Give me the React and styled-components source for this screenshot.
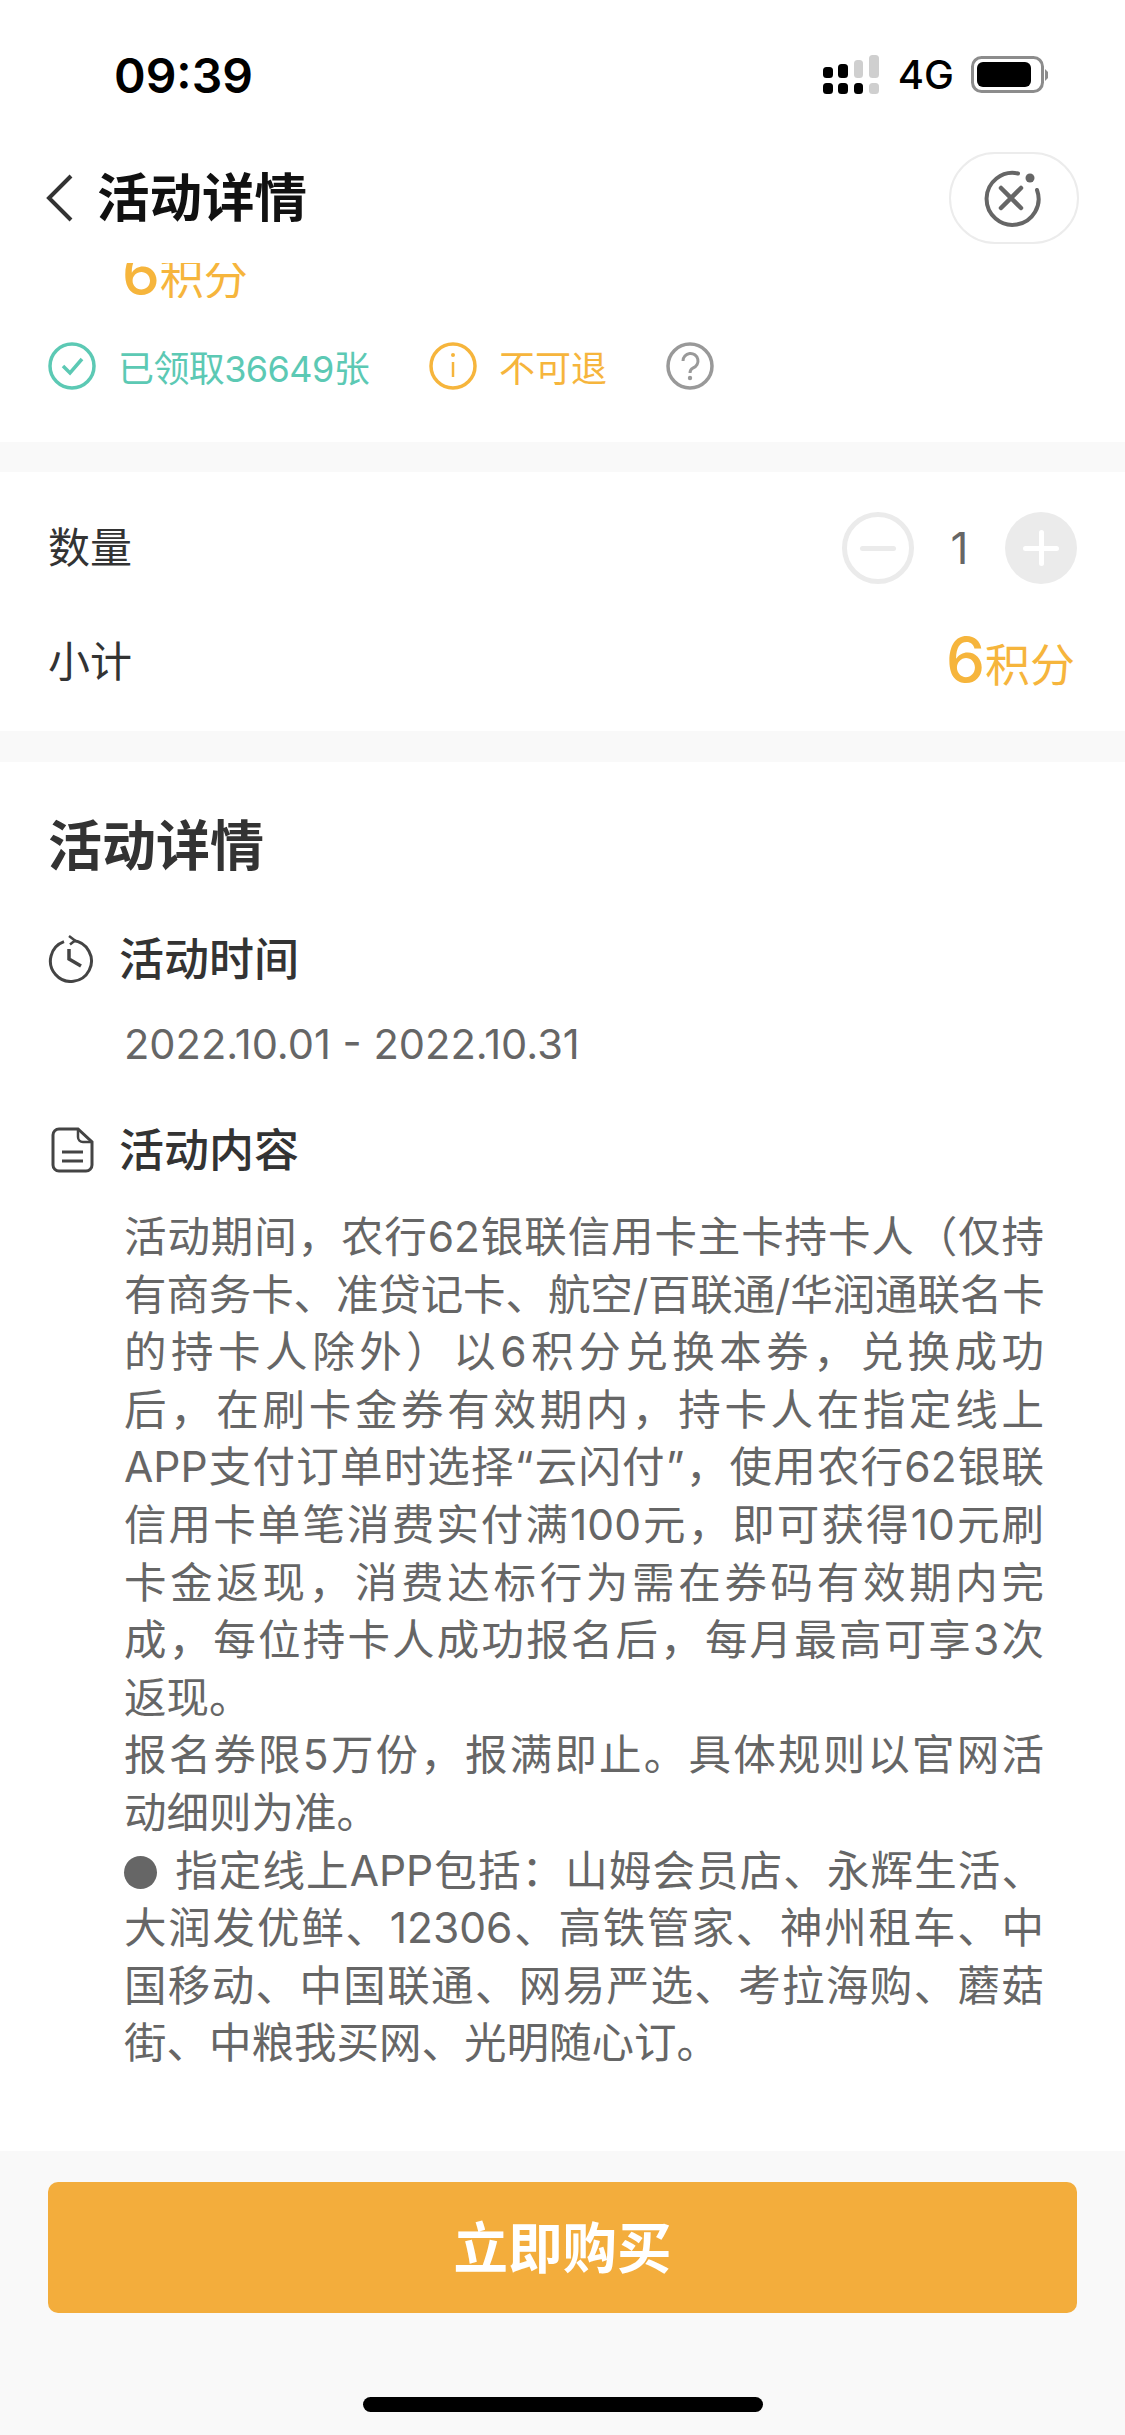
import React from "react";
import styled, { createGlobalStyle } from "styled-components";

const orange = "#f6b53c";
const teal = "#5cc9b4";

const GlobalStyle = createGlobalStyle`
  html, body { margin: 0; padding: 0; background: #fff; }
  * { box-sizing: border-box; }
  body { font-family: Inter, "Noto Sans CJK SC", "Noto Sans", sans-serif; }
`;

const Page = styled.div`
  width: 1125px;
  height: 2435px;
  display: flex;
  flex-direction: column;
  background: #fff;
  overflow: hidden;
`;

const StatusBar = styled.div`
  height: 150px;
  flex: none;
  display: flex;
  align-items: center;
  justify-content: space-between;
  padding: 0 76px 0 114px;
`;

const Time = styled.span`
  font-size: 48px;
  font-weight: 600;
  color: #000;
`;

const StatusIcons = styled.div`
  display: flex;
  align-items: center;
  gap: 17px;
`;

const Network = styled.span`
  font-size: 40px;
  font-weight: 500;
  color: #000;
  line-height: 1;
`;

const Header = styled.div`
  height: 96px;
  flex: none;
  display: flex;
  align-items: center;
  justify-content: space-between;
  padding: 0 46px 0 46px;
`;

const HeaderLeft = styled.div`
  display: flex;
  align-items: center;
  gap: 24px;
`;

const HeaderTitle = styled.span`
  font-size: 52.5px;
  font-weight: 700;
  color: #111;
  line-height: 1;
`;

const CapsuleButton = styled.div`
  width: 130px;
  height: 92px;
  border: 2px solid #ececec;
  border-radius: 46px;
  display: flex;
  align-items: center;
  justify-content: center;
`;

const Content = styled.div`
  flex: 1;
  min-height: 0;
  overflow: hidden;
`;

const PointsClip = styled.div`
  margin-top: 17px;
  height: 35px;
  padding-left: 122px;
  overflow: hidden;
  display: flex;
  align-items: flex-end;
`;

const PointsText = styled.div`
  display: flex;
  align-items: baseline;
  color: ${orange};
  font-size: 44px;
  line-height: 50px;
  flex: none;
  margin-bottom: -6px;
`;

const PointsNumber = styled.span`
  font-size: 60px;
  font-weight: 500;
`;

const TagRow = styled.div`
  display: flex;
  align-items: center;
  height: 144px;
  padding: 0 0 8px 48px;
`;

const Tag = styled.div`
  display: flex;
  align-items: center;
  gap: 22px;
  margin-right: ${(p) => p.$gap || 0}px;
  color: ${(p) => p.$color};
  font-size: 36px;
  letter-spacing: ${(p) => (p.$tight ? "-0.6px" : "normal")};
`;

const Band = styled.div`
  height: ${(p) => p.$height}px;
  background: #f9f9f9;
`;

const OrderRows = styled.div`
  padding: 0 50px 0 48px;
  height: 259px;
  display: flex;
  flex-direction: column;
`;

const OrderRow = styled.div`
  display: flex;
  align-items: center;
  justify-content: space-between;
  height: ${(p) => p.$height}px;
`;

const RowLabel = styled.span`
  font-size: 42px;
  color: #333;
  line-height: 1;
  padding-bottom: 1px;
`;

const Stepper = styled.div`
  display: flex;
  align-items: center;
  margin-right: -2px;
`;

const StepCount = styled.span`
  width: 91px;
  text-align: center;
  font-size: 44px;
  color: #666;
`;

const StepMinus = styled.div`
  width: 72px;
  height: 72px;
  border: 5px solid #ebebeb;
  border-radius: 50%;
  display: flex;
  align-items: center;
  justify-content: center;

  &::before {
    content: "";
    width: 36px;
    height: 5px;
    background: #ebebeb;
    border-radius: 3px;
  }
`;

const StepPlus = styled.div`
  width: 72px;
  height: 72px;
  background: #ebebeb;
  border-radius: 50%;
  position: relative;

  &::before, &::after {
    content: "";
    position: absolute;
    background: #fff;
    border-radius: 3px;
  }
  &::before { left: 18px; top: 34px; width: 36px; height: 5px; }
  &::after { left: 34px; top: 18px; width: 5px; height: 36px; }
`;

const Subtotal = styled.div`
  display: flex;
  align-items: baseline;
  color: ${orange};
  font-size: 45px;
  line-height: 1;
  padding-bottom: 5px;
`;

const SubtotalNumber = styled.span`
  font-size: 62px;
  font-weight: 500;
`;

const Details = styled.div`
  padding: 0 52px 0 48px;
`;

const DetailsTitle = styled.h2`
  margin: 55px 0 1px;
  font-size: 54px;
  font-weight: 700;
  line-height: 60px;
  color: #333;
`;

const SubHeading = styled.div`
  display: flex;
  align-items: center;
  margin-top: ${(p) => p.$top}px;
  height: 50px;
  font-size: 45px;
  font-weight: 500;
  color: #333;
`;

const SubIcon = styled.div`
  width: 71px;
  flex: none;
  display: flex;
`;

const SubLabel = styled.span`
  line-height: 1;
`;

const DateText = styled.div`
  margin: 35px 0 0 76px;
  font-size: 41.6px;
  line-height: 50px;
  color: #666;
`;

const Body = styled.div`
  margin: 33px 0 0 76px;
  width: 920px;
  font-size: 42.5px;
  line-height: 57.6px;
  color: #666;
`;

const BodyLine = styled.div`
  white-space: nowrap;
  text-align: justify;
  text-align-last: ${(p) => (p.$last ? "left" : "justify")};
  letter-spacing: ${(p) => (p.$tight ? "-0.7px" : "normal")};
`;

const Dot = styled.span`
  display: inline-block;
  width: 33px;
  height: 33px;
  margin-right: 17px;
  border-radius: 50%;
  background: #666;
  vertical-align: -3px;
`;

const Footer = styled.div`
  height: 284px;
  flex: none;
  background: #f9f9f9;
  padding: 31px 48px 0;
  display: flex;
  flex-direction: column;
  align-items: center;
`;

const BuyButton = styled.div`
  width: 100%;
  height: 131px;
  border-radius: 10px;
  background: #f3ad3c;
  color: #fff;
  font-size: 54.5px;
  font-weight: 700;
  padding-bottom: 7px;
  display: flex;
  align-items: center;
  justify-content: center;
`;

const HomeIndicator = styled.div`
  width: 400px;
  height: 15px;
  margin-top: 84px;
  background: #000;
  border-radius: 8px;
`;

const Signal = () => (
  <svg width="58" height="40" viewBox="0 0 58 40">
    <rect x="0" y="28" width="10" height="11" rx="3.5" fill="#000" />
    <rect x="15" y="28" width="10" height="11" rx="3.5" fill="#000" />
    <rect x="31" y="28" width="9" height="11" rx="3.5" fill="#000" />
    <rect x="46" y="28" width="10" height="11" rx="3.5" fill="#cfcfcf" />
    <rect x="0" y="12" width="10" height="11" rx="3.5" fill="#000" />
    <rect x="15" y="9" width="10" height="14" rx="3.5" fill="#000" />
    <rect x="31" y="5" width="9" height="18" rx="3.5" fill="#cfcfcf" />
    <rect x="46" y="0" width="10" height="23" rx="3.5" fill="#cfcfcf" />
  </svg>
);

const Battery = () => (
  <svg width="78" height="38" viewBox="0 0 78 38">
    <rect x="1.5" y="1.5" width="70" height="34" rx="9" fill="none" stroke="#8c8c8c" strokeWidth="3" />
    <rect x="6" y="6" width="54" height="25" rx="6" fill="#000" />
    <path d="M74 13 L77 16 V22 L74 25 Z" fill="#8c8c8c" />
  </svg>
);

const BackIcon = () => (
  <svg width="27" height="48" viewBox="0 0 27 48">
    <path d="M25 2 L3 24 L25 46" fill="none" stroke="#333" strokeWidth="4" />
  </svg>
);

const CloseIcon = () => (
  <svg width="62" height="62" viewBox="0 0 62 62" style={{ marginLeft: -4 }}>
    <path d="M37 6.5 A26 26 0 1 0 56 23" fill="none" stroke="#666" strokeWidth="4" strokeLinecap="round" />
    <circle cx="49" cy="11" r="4.5" fill="#666" />
    <path d="M20 21 L40 41 M40 21 L20 41" stroke="#666" strokeWidth="4.5" strokeLinecap="round" />
  </svg>
);

const CheckCircle = () => (
  <svg width="48" height="48" viewBox="0 0 48 48">
    <circle cx="24" cy="24" r="22" fill="none" stroke={teal} strokeWidth="3.5" />
    <path d="M15 24 L22 31 L34 17" fill="none" stroke={teal} strokeWidth="3.5" />
  </svg>
);

const InfoCircle = () => (
  <svg width="48" height="48" viewBox="0 0 48 48">
    <circle cx="24" cy="24" r="22" fill="none" stroke={orange} strokeWidth="3.5" />
    <circle cx="24" cy="13" r="2" fill={orange} />
    <path d="M24 20 V35" stroke={orange} strokeWidth="2.5" />
  </svg>
);

const HelpCircle = () => (
  <svg width="48" height="48" viewBox="0 0 48 48" style={{ marginLeft: -1 }}>
    <circle cx="24" cy="24" r="22" fill="none" stroke="#999" strokeWidth="3.5" />
    <path d="M17 19 A7.5 7.5 0 1 1 27 26 Q24 27.5 24 31" fill="none" stroke="#999" strokeWidth="3" />
    <circle cx="24" cy="36" r="2.2" fill="#999" />
  </svg>
);

const ClockIcon = () => (
  <svg width="46" height="48" viewBox="0 0 46 48">
    <path d="M25 5.6 A20.5 20.5 0 1 1 16 6.7" fill="none" stroke="#444" strokeWidth="3" />
    <path d="M21 1 L27 5.5 L22 9.5" fill="none" stroke="#444" strokeWidth="2.5" />
    <path d="M21 14 V24 L33 31" fill="none" stroke="#444" strokeWidth="3.5" />
  </svg>
);

const DocIcon = () => (
  <svg width="44" height="46" viewBox="0 0 44 46" style={{ marginLeft: 3 }}>
    <path d="M8 2 H27 L41 15 V38 A6 6 0 0 1 35 44 H8 A6 6 0 0 1 2 38 V8 A6 6 0 0 1 8 2 Z" fill="none" stroke="#444" strokeWidth="3" />
    <path d="M27 2 V10 A5 5 0 0 0 32 15 H41" fill="none" stroke="#444" strokeWidth="2.5" />
    <path d="M11 25 H32 M11 34 H32" stroke="#444" strokeWidth="3" />
  </svg>
);

const bodyLines = [
  { text: "活动期间，农行62银联信用卡主卡持卡人（仅持" },
  { text: "有商务卡、准贷记卡、航空/百联通/华润通联名卡", tight: true },
  { text: "的持卡人除外）以6积分兑换本券，兑换成功" },
  { text: "后，在刷卡金券有效期内，持卡人在指定线上" },
  { text: "APP支付订单时选择“云闪付”，使用农行62银联" },
  { text: "信用卡单笔消费实付满100元，即可获得10元刷" },
  { text: "卡金返现，消费达标行为需在券码有效期内完" },
  { text: "成，每位持卡人成功报名后，每月最高可享3次" },
  { text: "返现。", last: true },
  { text: "报名券限5万份，报满即止。具体规则以官网活" },
  { text: "动细则为准。", last: true },
];

const appLines = [
  { text: "大润发优鲜、12306、高铁管家、神州租车、中" },
  { text: "国移动、中国联通、网易严选、考拉海购、蘑菇" },
  { text: "街、中粮我买网、光明随心订。", last: true },
];

export default function App() {
  return (
    <Page>
      <GlobalStyle />
      <StatusBar>
        <Time>09:39</Time>
        <StatusIcons>
          <Signal />
          <Network>4G</Network>
          <Battery />
        </StatusIcons>
      </StatusBar>
      <Header>
        <HeaderLeft>
          <BackIcon />
          <HeaderTitle>活动详情</HeaderTitle>
        </HeaderLeft>
        <CapsuleButton>
          <CloseIcon />
        </CapsuleButton>
      </Header>
      <Content>
        <PointsClip>
          <PointsText>
            <PointsNumber>6</PointsNumber>积分
          </PointsText>
        </PointsClip>
        <TagRow>
          <Tag $color={teal} $gap={60} $tight>
            <CheckCircle />
            已领取36649张
          </Tag>
          <Tag $color={orange} $gap={60}>
            <InfoCircle />
            不可退
          </Tag>
          <HelpCircle />
        </TagRow>
        <Band $height={30} />
        <OrderRows>
          <OrderRow $height={152}>
            <RowLabel>数量</RowLabel>
            <Stepper>
              <StepMinus />
              <StepCount>1</StepCount>
              <StepPlus />
            </Stepper>
          </OrderRow>
          <OrderRow $height={76}>
            <RowLabel>小计</RowLabel>
            <Subtotal>
              <SubtotalNumber>6</SubtotalNumber>积分
            </Subtotal>
          </OrderRow>
        </OrderRows>
        <Band $height={31} />
        <Details>
          <DetailsTitle>活动详情</DetailsTitle>
          <SubHeading $top={57}>
            <SubIcon>
              <ClockIcon />
            </SubIcon>
            <SubLabel>活动时间</SubLabel>
          </SubHeading>
          <DateText>2022.10.01 - 2022.10.31</DateText>
          <SubHeading $top={56}>
            <SubIcon>
              <DocIcon />
            </SubIcon>
            <SubLabel>活动内容</SubLabel>
          </SubHeading>
          <Body>
            {bodyLines.map((line) => (
              <BodyLine key={line.text} $last={line.last} $tight={line.tight}>
                {line.text}
              </BodyLine>
            ))}
            <BodyLine>
              <Dot />指定线上APP包括：山姆会员店、永辉生活、
            </BodyLine>
            {appLines.map((line) => (
              <BodyLine key={line.text} $last={line.last}>
                {line.text}
              </BodyLine>
            ))}
          </Body>
        </Details>
      </Content>
      <Footer>
        <BuyButton>立即购买</BuyButton>
        <HomeIndicator />
      </Footer>
    </Page>
  );
}
